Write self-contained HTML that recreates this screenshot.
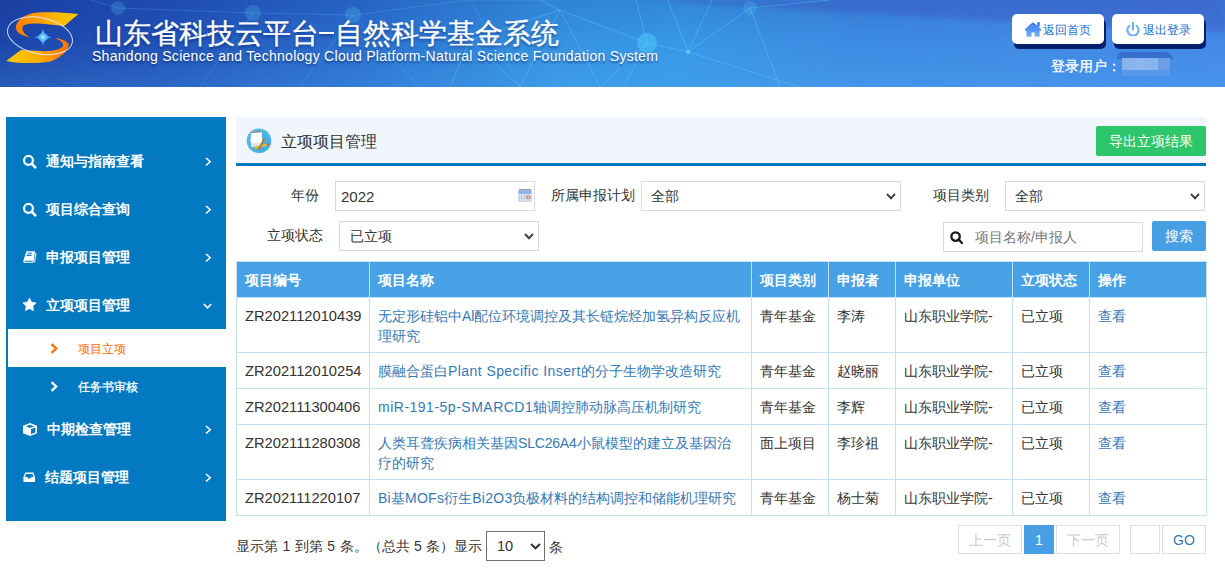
<!DOCTYPE html>
<html><head><meta charset="utf-8">
<style>
*{margin:0;padding:0;box-sizing:border-box}
html,body{width:1225px;height:576px;overflow:hidden;background:#fff;font-family:"Liberation Sans",sans-serif;color:#333;font-size:14px}
.abs{position:absolute}
#hdr{position:absolute;left:0;top:0;width:1225px;height:87px;overflow:hidden;
 background:linear-gradient(90deg,#1c44a8 0px,#2050b5 150px,#2a6ccc 350px,#3592e2 550px,#3797e6 680px,#3d8ae2 850px,#4488e6 1225px)}
#hdr .shade{position:absolute;left:0;top:0;width:1225px;height:87px;background:linear-gradient(180deg,rgba(15,35,130,0.14) 0%,rgba(15,35,130,0.0) 45%,rgba(90,190,255,0.2) 100%)}
#hdr .band{position:absolute;left:0;top:0;width:1225px;height:87px;filter:blur(2px)}
.title{position:absolute;left:95px;top:14.5px;font-size:27.7px;-webkit-text-stroke:0.35px #fff;color:#fff;white-space:nowrap;text-shadow:0 2px 3px rgba(0,20,90,.5)}
.sub{position:absolute;left:92px;top:48px;font-size:14px;letter-spacing:0.28px;color:#fff;white-space:nowrap;text-shadow:0 1.5px 2px rgba(0,20,90,.5)}
.tbtn{position:absolute;top:14px;width:92px;height:30px;background:#fff;border-radius:5px;box-shadow:2px 5px 0 #06206e;color:#1a6fd2;font-size:12px;line-height:33px;white-space:nowrap}
.tbtn span{position:absolute;top:0}
.user{position:absolute;left:1051px;top:58px;color:#fff;font-size:13.6px;-webkit-text-stroke:0.3px #fff;white-space:nowrap}
#side{position:absolute;left:6px;top:117px;width:220px;height:404px;background:#0379c1}
.mi{position:absolute;left:0;width:220px;height:48px;color:#fff;font-weight:bold;font-size:14px;line-height:48px}
.mi .ic{position:absolute;left:17px;top:0}
.mi .tx{position:absolute;left:40px;top:0;white-space:nowrap}
.mi .ar{position:absolute;left:199px;top:0}
.si{position:absolute;left:2px;width:218px;height:38px;font-size:12px;line-height:38px}
.si .tx{position:absolute;left:70px;top:1px;white-space:nowrap}
#main{position:absolute;left:236px;top:117px;width:970px}
.ph{position:absolute;left:0;top:0;width:970px;height:45px;background:#f1f5fc}
.phb{position:absolute;left:0;top:46px;width:970px;height:3px;background:#0876c0}
.lbl{position:absolute;white-space:nowrap;font-size:14px;color:#333;line-height:30px}
.inp{position:absolute;height:30px;border:1px solid #d9d9d9;background:#fff;font-size:14px;line-height:28px;color:#333;white-space:nowrap}
table{position:absolute;left:236px;top:261px;width:971px;border-collapse:collapse;table-layout:fixed;font-size:14px}
td,th{border:1px solid #c5e2f4;padding:8px 8px 7px 8px;line-height:20px;text-align:left;vertical-align:top}
th{background:#47a1e5;color:#fff;font-weight:bold;border-color:#c5e2f4}
td a{color:#337ab7;text-decoration:none}
.pg{position:absolute;top:525px;height:29px;border:1px solid #dedede;font-size:14px;line-height:28.5px;text-align:center;color:#ccc}
.dash{display:inline-block;width:15.5px;height:27px;position:relative}.dash:after{content:"";position:absolute;left:0px;top:16.5px;width:15px;height:2px;background:#fff;box-shadow:0 2px 3px rgba(0,20,90,.5)}
.dbl td{padding-bottom:6px}.id{font-size:14.7px}
</style></head><body>
<div id="hdr">
 <div class="shade"></div><svg class="band" width="1225" height="87"><path d="M560 -5 Q850 14 1230 32 L1230 -5Z" fill="rgba(60,55,175,0.25)"/></svg>
 <svg class="abs" style="left:0;top:0" width="1225" height="87">
  <g stroke="rgba(100,215,255,0.2)" stroke-width="1" fill="none">
   <path d="M118 8 L90 0 M118 8 L253 13 L200 87 M253 13 L353 15 L300 87 M353 15 L420 87 M353 15 L470 0"/>
   <path d="M470 0 L520 87 M470 0 L560 0"/>
  </g>
  <g stroke="rgba(100,220,255,0.33)" stroke-width="1" fill="none">
   <path d="M647 43 L688 52 L750 8 M688 52 L668 0 M688 52 L712 0 M750 8 L780 87 M688 52 L800 87 M647 43 L623 87 M647 43 L636 0 M647 43 L560 10 M560 10 L520 87 M560 10 L600 87 M600 87 L647 43 M750 8 L830 0 M540 0 L560 10 M470 40 L560 10 M470 40 L450 87 M470 40 L520 87"/>
  </g>
  <g fill="rgba(100,215,255,0.2)">
   <circle cx="118" cy="8" r="7"/><circle cx="253" cy="13" r="8"/><circle cx="353" cy="15" r="8"/><circle cx="750" cy="8" r="7"/>
  </g>
  <circle cx="647" cy="43" r="10" fill="rgba(80,210,255,0.45)"/>
  <circle cx="688" cy="52" r="2.2" fill="rgba(100,220,255,0.6)"/>
 </svg>
 <svg class="abs" style="left:0;top:0" width="90" height="80" viewBox="0 0 90 80">
  <defs>
   <linearGradient id="gy" x1="0" y1="0" x2="1" y2="0"><stop offset="0" stop-color="#ff7a00"/><stop offset="0.6" stop-color="#ffb400"/><stop offset="1" stop-color="#ffcc00"/></linearGradient>
   <linearGradient id="gy2" x1="0" y1="0" x2="1" y2="0"><stop offset="0" stop-color="#ffcc00"/><stop offset="0.5" stop-color="#ffb000"/><stop offset="1" stop-color="#ff7000"/></linearGradient>
   <radialGradient id="gs"><stop offset="0" stop-color="#d8f0ff"/><stop offset="0.25" stop-color="#6cc4ff"/><stop offset="0.6" stop-color="#3a9cf5"/><stop offset="1" stop-color="#2a80e8"/></radialGradient>
  </defs>
  <path d="M78.4 14 C60 12 40 12 33 13 C25 15 16 20 15.8 27.6 C16 32 20 35 30 37.7 C24 34 21 30 23 26 C26 23.5 32 23.5 40 23.6 L64.3 25.9 Z" fill="url(#gy)"/>
  <path d="M6.2 60.9 C20 63.5 35 64 50.8 61.4 C60 58 67 52 68.8 45.6 C69 42 63 39 55.3 38.3 C60 40 63.5 43 63.2 45.6 C62 49 55 51 45 51.3 L20.9 50.1 Z" fill="url(#gy2)"/>
  <ellipse cx="40" cy="35.8" rx="33" ry="18" transform="rotate(12 40 35.8)" fill="none" stroke="rgba(215,240,255,0.9)" stroke-width="1"/>
  <path d="M43 28.5 Q44.3 35.8 52 37.2 Q44.3 38.6 43 46 Q41.7 38.6 34 37.2 Q41.7 35.8 43 28.5Z" fill="url(#gs)"/>
 </svg>
 <div class="title">山东省科技云平台<span class="dash"></span>自然科学基金系统</div>
 <div class="sub">Shandong Science and Technology Cloud Platform-Natural Science Foundation System</div>
 <div class="tbtn" style="left:1012px">
  <svg class="abs" style="left:13px;top:4px" width="17" height="20" viewBox="0 0 17 20"><defs><linearGradient id="gh" gradientUnits="userSpaceOnUse" x1="0" y1="4" x2="0" y2="19"><stop offset="0" stop-color="#2a6cf0"/><stop offset="1" stop-color="#7ab6fa"/></linearGradient></defs><g fill="url(#gh)"><path d="M0.9 11.8 L8 5.6 L15.1 11.8" fill="none" stroke="url(#gh)" stroke-width="2.3" stroke-linecap="round" stroke-linejoin="round"/><rect x="12.2" y="4.2" width="2.5" height="4.6"/><path d="M1.4 12.8 L8 7.3 L14.6 12.8 L14.6 18.7 L9.6 18.7 L9.6 14.6 L6.5 14.6 L6.5 18.7 L1.4 18.7Z"/></g></svg>
  <span style="left:31px">返回首页</span>
 </div>
 <div class="tbtn" style="left:1112px">
  <svg class="abs" style="left:14px;top:8px" width="14" height="14" viewBox="0 0 14 14"><path d="M4 3.3 A5.6 5.6 0 1 0 10 3.3" fill="none" stroke="#6ab0f8" stroke-width="2.1"/><path d="M7 0 L7 8.3" stroke="#6ab0f8" stroke-width="2.1"/></svg>
  <span style="left:31px">退出登录</span>
 </div>
 <div class="user">登录用户：</div>
 <div class="abs" style="left:1117px;top:52px;width:56px;height:7px;background:rgba(45,90,185,.55);border-radius:8px 10px 0 0;filter:blur(0.6px)"></div>
 <div class="abs" style="left:1122px;top:58px;width:12px;height:12px;background:#8ab2ec"></div>
 <div class="abs" style="left:1134px;top:58px;width:12px;height:12px;background:#8db4ee"></div>
 <div class="abs" style="left:1146px;top:58px;width:12px;height:12px;background:#8ab4ec"></div>
 <div class="abs" style="left:1158px;top:58px;width:12px;height:12px;background:#6c9de6"></div>
 <div class="abs" style="left:1122px;top:70px;width:48px;height:6px;background:rgba(110,165,240,.45)"></div>
</div>

<div id="side">
 <div class="mi" style="top:20px">
  <svg class="ic" style="top:18px" width="14" height="14" viewBox="0 0 14 14"><circle cx="5.5" cy="5.4" r="4.4" fill="none" stroke="#fff" stroke-width="2.2"/><path d="M8.8 8.8 L12.3 12.3" stroke="#fff" stroke-width="2.6" stroke-linecap="round"/></svg>
  <span class="tx">通知与指南查看</span>
  <svg class="ar" style="top:20px" width="7" height="10" viewBox="0 0 7 10"><path d="M1 1 L5.2 4.7 L1 8.4" fill="none" stroke="#fff" stroke-width="1.5"/></svg>
 </div>
 <div class="mi" style="top:68px">
  <svg class="ic" style="top:18px" width="14" height="14" viewBox="0 0 14 14"><circle cx="5.5" cy="5.4" r="4.4" fill="none" stroke="#fff" stroke-width="2.2"/><path d="M8.8 8.8 L12.3 12.3" stroke="#fff" stroke-width="2.6" stroke-linecap="round"/></svg>
  <span class="tx">项目综合查询</span>
  <svg class="ar" style="top:20px" width="7" height="10" viewBox="0 0 7 10"><path d="M1 1 L5.2 4.7 L1 8.4" fill="none" stroke="#fff" stroke-width="1.5"/></svg>
 </div>
 <div class="mi" style="top:116px">
  <svg class="ic" style="top:18px" width="15" height="13" viewBox="0 0 15 13"><path d="M3.4 0.2 L12 0.2 L10.4 11.7 L1.4 11.7 Q0 11.6 0.3 10 Z" fill="#fff"/><path d="M12.4 1.6 L13.6 2.2 L12.1 11.1 L10.9 11.7 Z" fill="#fff" opacity="0.85"/><path d="M4.4 2.3 L9.2 2.3 M3.6 4.4 L8.5 4.4 M1.8 10.3 L9.6 10.3" stroke="#0379c1" stroke-width="1.1"/></svg>
  <span class="tx">申报项目管理</span>
  <svg class="ar" style="top:20px" width="7" height="10" viewBox="0 0 7 10"><path d="M1 1 L5.2 4.7 L1 8.4" fill="none" stroke="#fff" stroke-width="1.5"/></svg>
 </div>
 <div class="mi" style="top:164px">
  <svg class="ic" style="top:16px;left:15.5px" width="15" height="15" viewBox="0 0 15 15"><path d="M7.5 0.8 L9.7 5.1 L14.4 5.8 L11 9.2 L11.8 14 L7.5 11.8 L3.2 14 L4 9.2 L0.6 5.8 L5.3 5.1Z" fill="#fff" stroke="#fff" stroke-width="0.3" stroke-linejoin="round"/></svg>
  <span class="tx">立项项目管理</span>
  <svg class="ar" style="top:22px;left:197px" width="9" height="6" viewBox="0 0 9 6"><path d="M0.8 1 L4.5 4.8 L8.2 1" fill="none" stroke="#fff" stroke-width="1.6"/></svg>
 </div>
 <div class="si" style="top:212px;background:#fff;color:#ff6a00">
  <svg class="abs" style="left:42px;top:14px" width="9" height="11" viewBox="0 0 9 11"><path d="M1.6 1.2 L6.2 5.5 L1.6 9.8" fill="none" stroke="#ff6a00" stroke-width="2.3"/></svg>
  <span class="tx">项目立项</span>
 </div>
 <div class="si" style="top:250px;color:#fff;-webkit-text-stroke:0.3px #fff">
  <svg class="abs" style="left:42px;top:14px" width="9" height="11" viewBox="0 0 9 11"><path d="M1.6 1.2 L6.2 5.5 L1.6 9.8" fill="none" stroke="#fff" stroke-width="2.3"/></svg>
  <span class="tx">任务书审核</span>
 </div>
 <div class="mi" style="top:288px">
  <svg class="ic" style="top:18px" width="14" height="14" viewBox="0 0 14 14"><path d="M7 0 L14 2.7 L14 10.3 L7 13 L0 10.3 L0 2.7Z" fill="#fff"/><path d="M7 1.7 L11.3 3.3 L7 4.9 L2.7 3.3Z" fill="#0379c1"/><path d="M8 6.1 L12.4 4.5 L12.4 9.4 L8 11.1Z" fill="#0379c1"/></svg>
  <span class="tx" style="left:41px">中期检查管理</span>
  <svg class="ar" style="top:20px" width="7" height="10" viewBox="0 0 7 10"><path d="M1 1 L5.2 4.7 L1 8.4" fill="none" stroke="#fff" stroke-width="1.5"/></svg>
 </div>
 <div class="mi" style="top:336px">
  <svg class="ic" style="top:19px;left:17px" width="12.5" height="10.5" viewBox="0 0 14 12" preserveAspectRatio="none"><path d="M2.5 0.5 L11.5 0.5 L13.5 6 L13.5 11.5 L0.5 11.5 L0.5 6 Z" fill="#fff"/><path d="M3.3 2.2 L10.7 2.2 L11.8 5.8 L9 5.8 L8.3 7.5 L5.7 7.5 L5 5.8 L2.2 5.8Z" fill="#0379c1"/></svg>
  <span class="tx" style="left:39px">结题项目管理</span>
  <svg class="ar" style="top:20px" width="7" height="10" viewBox="0 0 7 10"><path d="M1 1 L5.2 4.7 L1 8.4" fill="none" stroke="#fff" stroke-width="1.5"/></svg>
 </div>
</div>

<div id="main">
 <div class="ph"></div>
 <div class="phb"></div>
 <svg class="abs" style="left:10px;top:11px" width="27" height="27" viewBox="0 0 27 27">
  <circle cx="13" cy="12.8" r="12.3" fill="#4fb8e8"/>
  <path d="M16 3 L25 12 A12.3 12.3 0 0 1 13 25.1 L6 20 Z" fill="#44aee2" opacity="0.8"/>
  <path d="M4.6 3.6 L15.6 2.8 L16.6 17.2 L5.2 19 Q6.2 15 4.2 12.5 Q5.5 8 4.6 3.6Z" fill="#fff"/>
  <path d="M5.2 15.5 L16.6 14.5 L16.6 17.2 L5.2 19Z" fill="#dfe3e8"/>
  <path d="M4.6 3.6 L15.6 2.8 L15.7 4.3 L4.8 5Z" fill="#7d8790"/>
  <path d="M8.4 20.2 L22 16.4" stroke="#f2c21c" stroke-width="1.8"/>
  <path d="M21 16.7 L22.8 16.2" stroke="#d03a5a" stroke-width="1.8"/>
  <path d="M18.7 10.2 L12.5 22" stroke="#b57a30" stroke-width="2"/>
 </svg>
 <div class="abs" style="left:45px;top:12.5px;font-size:16.2px;line-height:22px;color:#333;white-space:nowrap">立项项目管理</div>
 <div class="abs" style="left:860px;top:9px;width:110px;height:30px;background:#2ec66b;border-radius:2px;color:#fff;font-size:14px;line-height:30px;text-align:center">导出立项结果</div>
</div>

<div class="lbl" style="left:291px;top:180px">年份</div>
<div class="inp" style="left:335px;top:181px;width:200px;padding-left:5px;font-size:15px;line-height:30px">2022
 <svg class="abs" style="left:182px;top:7px" width="14" height="13.5" viewBox="0 0 15 14" preserveAspectRatio="none"><rect x="1" y="0" width="13" height="1.6" fill="#9a9a9a"/><rect x="0.5" y="1.5" width="14" height="11.5" fill="#a9bcd9"/><rect x="0.5" y="1.5" width="14" height="3" fill="#8cb1f2"/><g fill="#eef3fa"><rect x="1.5" y="5.3" width="2" height="1.8"/><rect x="4.3" y="5.3" width="2" height="1.8"/><rect x="7.1" y="5.3" width="2" height="1.8"/><rect x="9.9" y="5.3" width="2" height="1.8"/><rect x="1.5" y="7.9" width="2" height="1.8"/><rect x="4.3" y="7.9" width="2" height="1.8"/><rect x="7.1" y="7.9" width="2" height="1.8"/><rect x="1.5" y="10.5" width="2" height="1.8"/><rect x="4.3" y="10.5" width="2" height="1.8"/><rect x="7.1" y="10.5" width="2" height="1.8"/><rect x="9.9" y="10.5" width="2" height="1.8"/><rect x="12.5" y="5.3" width="1.5" height="1.8"/><rect x="12.5" y="10.5" width="1.5" height="1.8"/></g><circle cx="11" cy="8.6" r="2.1" fill="#e8805a"/><rect x="10.6" y="7.6" width="0.8" height="2" fill="#fff"/></svg>
</div>
<div class="lbl" style="left:551px;top:180px">所属申报计划</div>
<div class="inp" style="left:641px;top:181px;width:260px;padding-left:9px">全部
 <svg class="abs" style="left:244px;top:11px" width="10" height="7" viewBox="0 0 10 7"><path d="M1 1 L5 5.2 L9 1" fill="none" stroke="#444" stroke-width="2"/></svg>
</div>
<div class="lbl" style="left:933px;top:180px">项目类别</div>
<div class="inp" style="left:1005px;top:181px;width:200px;padding-left:9px">全部
 <svg class="abs" style="left:184px;top:11px" width="10" height="7" viewBox="0 0 10 7"><path d="M1 1 L5 5.2 L9 1" fill="none" stroke="#444" stroke-width="2"/></svg>
</div>
<div class="lbl" style="left:267px;top:220px">立项状态</div>
<div class="inp" style="left:339px;top:221px;width:200px;padding-left:10px">已立项
 <svg class="abs" style="left:184px;top:11px" width="10" height="7" viewBox="0 0 10 7"><path d="M1 1 L5 5.2 L9 1" fill="none" stroke="#444" stroke-width="2"/></svg>
</div>
<div class="inp" style="left:943px;top:222px;width:200px;padding-left:31px;color:#777">项目名称/申报人
 <svg class="abs" style="left:5.5px;top:8px" width="14" height="14" viewBox="0 0 14 14"><circle cx="5.6" cy="5.6" r="4.2" fill="none" stroke="#1a1a1a" stroke-width="2.3"/><path d="M8.6 8.6 L12 12" stroke="#1a1a1a" stroke-width="2.4" stroke-linecap="round"/></svg>
</div>
<div class="abs" style="left:1152px;top:221px;width:54px;height:30px;background:#48a0e4;border-radius:2px;color:#fff;font-size:14px;line-height:30px;text-align:center">搜索</div>

<table>
 <colgroup><col style="width:133px"><col style="width:382px"><col style="width:77px"><col style="width:67px"><col style="width:117px"><col style="width:77px"><col style="width:117px"></colgroup>
 <tr><th>项目编号</th><th>项目名称</th><th>项目类别</th><th>申报者</th><th>申报单位</th><th>立项状态</th><th>操作</th></tr>
 <tr class="dbl"><td class="id">ZR202112010439</td><td><a>无定形硅铝中Al配位环境调控及其长链烷烃加氢异构反应机理研究</a></td><td>青年基金</td><td>李涛</td><td>山东职业学院-</td><td>已立项</td><td><a>查看</a></td></tr>
 <tr><td class="id">ZR202112010254</td><td><a>膜融合蛋白<span style="letter-spacing:0.43px">Plant Specific Insert</span>的分子生物学改造研究</a></td><td>青年基金</td><td>赵晓丽</td><td>山东职业学院-</td><td>已立项</td><td><a>查看</a></td></tr>
 <tr><td class="id">ZR202111300406</td><td><a><span style="letter-spacing:0.5px">miR-191-5p-SMARCD1</span>轴调控肺动脉高压机制研究</a></td><td>青年基金</td><td>李辉</td><td>山东职业学院-</td><td>已立项</td><td><a>查看</a></td></tr>
 <tr class="dbl"><td class="id">ZR202111280308</td><td><a>人类耳聋疾病相关基因<span style="letter-spacing:-0.2px">SLC26A4</span>小鼠模型的建立及基因治疗的研究</a></td><td>面上项目</td><td>李珍祖</td><td>山东职业学院-</td><td>已立项</td><td><a>查看</a></td></tr>
 <tr><td class="id">ZR202111220107</td><td><a><span style="letter-spacing:0.27px">Bi</span>基<span style="letter-spacing:0.27px">MOFs</span>衍生<span style="letter-spacing:0.27px">Bi2O3</span>负极材料的结构调控和储能机理研究</a></td><td>青年基金</td><td>杨士菊</td><td>山东职业学院-</td><td>已立项</td><td><a>查看</a></td></tr>
</table>

<div class="abs" style="left:236px;top:536px;font-size:14px;line-height:20px;white-space:nowrap;color:#333;word-spacing:0.6px">显示第 1 到第 5 条。（总共 5 条）显示</div>
<div class="inp" style="left:486px;top:531px;width:59px;padding-left:10px;border-color:#707070;line-height:29px;font-size:14.6px">10
 <svg class="abs" style="left:43px;top:11px" width="11" height="7" viewBox="0 0 11 7"><path d="M1 1 L5.5 5.3 L10 1" fill="none" stroke="#333" stroke-width="2"/></svg>
</div>
<div class="abs" style="left:549px;top:537px;font-size:14px;line-height:20px;color:#333">条</div>

<div class="pg" style="left:958px;width:64px">上一页</div>
<div class="pg" style="left:1024px;width:30px;background:#48a0e4;border-color:#48a0e4;color:#fff">1</div>
<div class="pg" style="left:1056px;width:64px">下一页</div>
<div class="pg" style="left:1130px;width:30px"></div>
<div class="pg" style="left:1162px;width:44px;color:#337ab7">GO</div>
</body></html>
